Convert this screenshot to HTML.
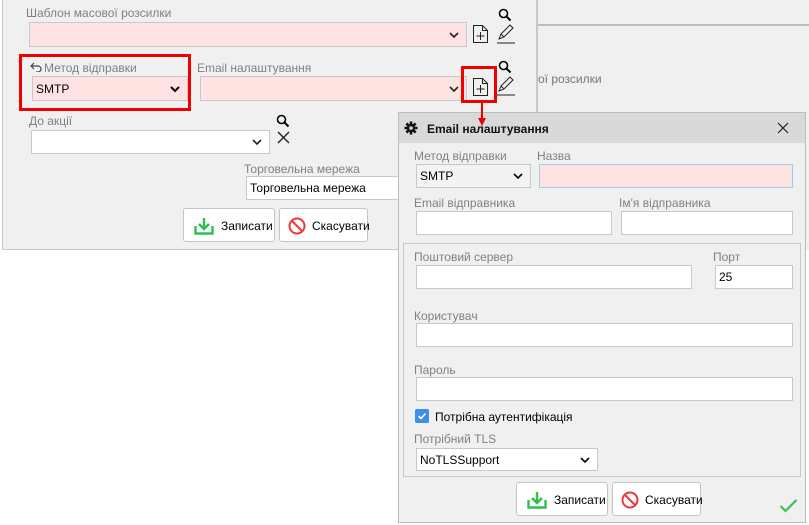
<!DOCTYPE html>
<html><head><meta charset="utf-8"><style>
*{box-sizing:border-box;margin:0;padding:0}
body{width:809px;height:525px;position:relative;overflow:hidden;background:#fff;font-family:"Liberation Sans",sans-serif;font-size:12px;color:#000}
.a{position:absolute}
.lbl{position:absolute;color:#808080;font-size:12px;line-height:14px;white-space:nowrap}
.box{position:absolute;border:1px solid #c8c8c8;background:#fff}
.pink{background:#ffe3e3}
.chev{position:absolute;right:7px;top:50%;margin-top:-4px}
.txt{position:absolute;left:3px;top:50%;margin-top:-7px;line-height:14px;font-size:12px}
.btn{position:absolute;border:1px solid #c4c4c4;border-radius:3px;background:#fff;font-size:12px}
</style></head><body>
<div class="a" style="left:537px;top:0;width:272px;height:250px;background:#f0f0f0"></div>
<div class="a" style="left:537px;top:24px;width:272px;height:2px;background:#bdbdbd"></div>
<div class="a" style="left:537px;top:0;width:1px;height:112px;background:#c8c8c8"></div>
<div class="lbl" style="left:538px;top:72px;color:#777">ої розсилки</div>

<div class="a" style="left:2px;top:-1px;width:535px;height:251px;background:#f0f0f0;border:1px solid #c8c8c8;border-top:none"></div>
<div class="lbl" style="left:26px;top:6px">Шаблон масової розсилки</div>
<div class="box pink" style="left:29px;top:22px;width:438px;height:25px"><svg class="chev" width="10" height="8" viewBox="0 0 10 8"><path d="M1 2l4 4 4-4" stroke="#222" stroke-width="1.6" fill="none"/></svg></div>
<svg class="a" style="left:498px;top:8px" width="14" height="14" viewBox="0 0 14 14"><circle cx="5.5" cy="5.5" r="4" stroke="#000" stroke-width="1.6" fill="none"/><path d="M8.5 8.5l4 4" stroke="#000" stroke-width="2"/></svg>
<svg class="a" style="left:472px;top:24px" width="17" height="20" viewBox="0 0 17 20"><path d="M1.5 1.5h9l5 5v12h-14z M10.5 1.5v5h5" stroke="#222" fill="none"/><path d="M8.5 8v8M4.5 12h8" stroke="#222"/></svg>
<svg class="a" style="left:496px;top:24px" width="20" height="20" viewBox="0 0 20 20"><path d="M3 15l2-5 9-9 3 3-9 9z M5 10l3 3" stroke="#222" fill="none"/><path d="M1 19h18" stroke="#222"/></svg>

<div class="a" style="left:19px;top:54px;width:172px;height:57px;border:3px solid #f00000"></div>
<svg class="a" style="left:30px;top:62px" width="12" height="10" viewBox="0 0 12 10"><path d="M4 1L1 4l3 3M1 4h7a3 3 0 010 6H6" stroke="#444" stroke-width="1.2" fill="none"/></svg>
<div class="lbl" style="left:44px;top:61px">Метод відправки</div>
<div class="box pink" style="left:32px;top:76px;width:156px;height:25px"><div class="txt">SMTP</div><svg class="chev" width="10" height="8" viewBox="0 0 10 8"><path d="M1 2l4 4 4-4" stroke="#000" stroke-width="2" fill="none"/></svg></div>
<div class="lbl" style="left:197px;top:61px">Email налаштування</div>
<div class="box pink" style="left:200px;top:76px;width:267px;height:25px"><svg class="chev" width="10" height="8" viewBox="0 0 10 8"><path d="M1 2l4 4 4-4" stroke="#222" stroke-width="1.6" fill="none"/></svg></div>
<svg class="a" style="left:498px;top:60px" width="14" height="14" viewBox="0 0 14 14"><circle cx="5.5" cy="5.5" r="4" stroke="#000" stroke-width="1.6" fill="none"/><path d="M8.5 8.5l4 4" stroke="#000" stroke-width="2"/></svg>
<div class="a" style="left:461px;top:66px;width:36px;height:37px;border:3px solid #f00000"></div>
<svg class="a" style="left:472px;top:77px" width="17" height="20" viewBox="0 0 17 20"><path d="M1.5 1.5h9l5 5v12h-14z M10.5 1.5v5h5" stroke="#222" fill="none"/><path d="M8.5 8v8M4.5 12h8" stroke="#222"/></svg>
<svg class="a" style="left:496px;top:76px" width="20" height="20" viewBox="0 0 20 20"><path d="M3 15l2-5 9-9 3 3-9 9z M5 10l3 3" stroke="#222" fill="none"/><path d="M1 19h18" stroke="#222"/></svg>

<div class="lbl" style="left:29px;top:114px">До акції</div>
<div class="box" style="left:31px;top:130px;width:239px;height:24px"><svg class="chev" width="10" height="8" viewBox="0 0 10 8"><path d="M1 2l4 4 4-4" stroke="#222" stroke-width="1.6" fill="none"/></svg></div>
<svg class="a" style="left:276px;top:114px" width="14" height="14" viewBox="0 0 14 14"><circle cx="5.5" cy="5.5" r="4" stroke="#000" stroke-width="1.6" fill="none"/><path d="M8.5 8.5l4 4" stroke="#000" stroke-width="2"/></svg>
<svg class="a" style="left:277px;top:131px" width="13" height="13" viewBox="0 0 13 13"><path d="M1 1l11 11M12 1L1 12" stroke="#222" stroke-width="1.4"/></svg>

<div class="lbl" style="left:244px;top:162px">Торговельна мережа</div>
<div class="box" style="left:246px;top:176px;width:160px;height:24px"><div class="txt" style="left:3px">Торговельна мережа</div></div>

<div class="btn" style="left:183px;top:208px;width:92px;height:34px"><svg class="a" style="left:10px;top:8px" width="20" height="18" viewBox="0 0 20 18"><path d="M10 1v11M5 7l5 5 5-5" stroke="#2fbf4f" stroke-width="2.4" fill="none"/><path d="M1.5 9v7.5h17V9" stroke="#2fbf4f" stroke-width="2.4" fill="none"/></svg><span class="a" style="left:37px;top:10px">Записати</span></div>
<div class="btn" style="left:279px;top:208px;width:89px;height:34px"><svg class="a" style="left:8px;top:8px" width="18" height="18" viewBox="0 0 18 18"><circle cx="9" cy="9" r="7.5" stroke="#f03838" stroke-width="2" fill="none"/><path d="M4 4l10 10" stroke="#f03838" stroke-width="2"/></svg><span class="a" style="left:32px;top:10px">Скасувати</span></div>

<div class="a" style="left:398px;top:112px;width:408px;height:411px;background:#f0f0f0;border:1px solid #bdbdbd"></div>
<div class="a" style="left:399px;top:113px;width:406px;height:30px;background:#d9d9d9"></div>
<svg class="a" style="left:404px;top:121px" width="14" height="14" viewBox="0 0 14 14"><g stroke="#111" stroke-width="2.6"><path d="M7 0.5v13M0.5 7h13M2.4 2.4l9.2 9.2M11.6 2.4l-9.2 9.2"/></g><circle cx="7" cy="7" r="4.2" fill="#111"/><circle cx="7" cy="7" r="1.8" fill="#d9d9d9"/></svg>
<div class="a" style="left:427px;top:122px;font-weight:bold;font-size:12px;color:#111">Email налаштування</div>
<svg class="a" style="left:777px;top:122px" width="12" height="12" viewBox="0 0 12 12"><path d="M1 1l10 10M11 1L1 11" stroke="#222" stroke-width="1.2"/></svg>
<svg class="a" style="left:476px;top:102px" width="12" height="26" viewBox="0 0 12 26"><path d="M6 0v20" stroke="#e00" stroke-width="2"/><path d="M2 16l4 8 4-8z" fill="#e00"/></svg>

<div class="lbl" style="left:414px;top:149px">Метод відправки</div>
<div class="box" style="left:416px;top:164px;width:115px;height:24px;background:#f3f3f3"><div class="txt">SMTP</div><svg class="chev" width="10" height="8" viewBox="0 0 10 8"><path d="M1 2l4 4 4-4" stroke="#000" stroke-width="1.6" fill="none"/></svg></div>
<div class="lbl" style="left:537px;top:149px">Назва</div>
<div class="box pink" style="left:539px;top:164px;width:254px;height:24px;border-color:#9ccaf3"></div>

<div class="lbl" style="left:414px;top:196px">Email відправника</div>
<div class="box" style="left:416px;top:211px;width:196px;height:24px"></div>
<div class="lbl" style="left:619px;top:196px">Ім'я відправника</div>
<div class="box" style="left:621px;top:211px;width:172px;height:24px"></div>

<div class="a" style="left:403px;top:243px;width:398px;height:234px;border:1px solid #c8c8c8"></div>
<div class="lbl" style="left:414px;top:250px">Поштовий сервер</div>
<div class="box" style="left:416px;top:265px;width:276px;height:24px"></div>
<div class="lbl" style="left:713px;top:250px">Порт</div>
<div class="box" style="left:715px;top:265px;width:78px;height:24px"><div class="txt">25</div></div>
<div class="lbl" style="left:414px;top:309px">Користувач</div>
<div class="box" style="left:416px;top:323px;width:377px;height:24px"></div>
<div class="lbl" style="left:414px;top:363px">Пароль</div>
<div class="box" style="left:416px;top:377px;width:377px;height:24px"></div>
<div class="a" style="left:415px;top:409px;width:14px;height:14px;background:#3d8ee8;border-radius:2px"></div>
<svg class="a" style="left:415px;top:409px" width="14" height="14" viewBox="0 0 14 14"><path d="M3.5 7l2.5 2.5 4.5-5" stroke="#fff" stroke-width="1.6" fill="none"/></svg>
<div class="a" style="left:435px;top:410px">Потрібна аутентифікація</div>
<div class="lbl" style="left:414px;top:432px">Потрібний TLS</div>
<div class="box" style="left:416px;top:448px;width:182px;height:23px"><div class="txt">NoTLSSupport</div><svg class="chev" width="10" height="8" viewBox="0 0 10 8"><path d="M1 2l4 4 4-4" stroke="#000" stroke-width="1.6" fill="none"/></svg></div>

<div class="btn" style="left:516px;top:482px;width:92px;height:34px"><svg class="a" style="left:10px;top:8px" width="20" height="18" viewBox="0 0 20 18"><path d="M10 1v11M5 7l5 5 5-5" stroke="#2fbf4f" stroke-width="2.4" fill="none"/><path d="M1.5 9v7.5h17V9" stroke="#2fbf4f" stroke-width="2.4" fill="none"/></svg><span class="a" style="left:37px;top:10px">Записати</span></div>
<div class="btn" style="left:612px;top:482px;width:89px;height:34px"><svg class="a" style="left:8px;top:8px" width="18" height="18" viewBox="0 0 18 18"><circle cx="9" cy="9" r="7.5" stroke="#f03838" stroke-width="2" fill="none"/><path d="M4 4l10 10" stroke="#f03838" stroke-width="2"/></svg><span class="a" style="left:32px;top:10px">Скасувати</span></div>
<svg class="a" style="left:779px;top:499px" width="19" height="14" viewBox="0 0 19 14"><path d="M1.5 7l5 5 11-11" stroke="#3cbf5a" stroke-width="2.2" fill="none"/></svg>
</body></html>
